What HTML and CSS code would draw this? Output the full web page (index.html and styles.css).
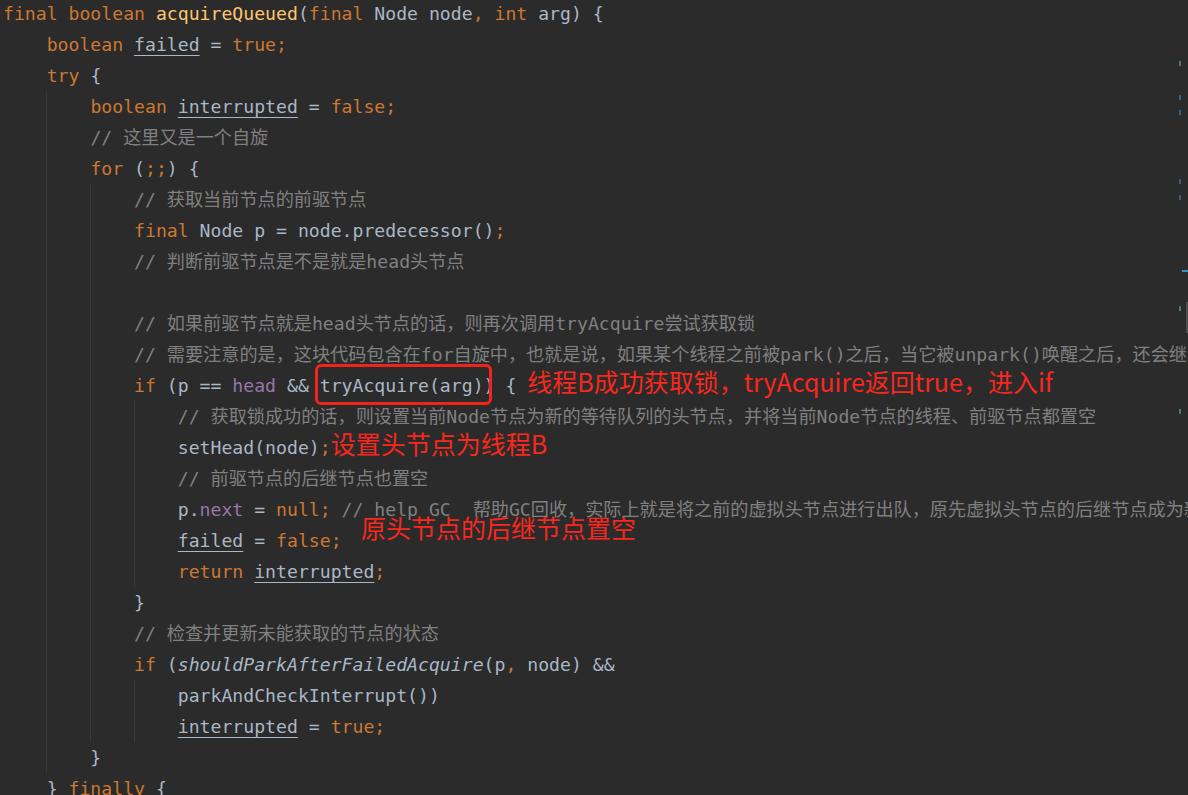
FILE: index.html
```html
<!DOCTYPE html>
<html lang="zh-CN">
  <head>
    <meta charset="UTF-8" />
    <title>acquireQueued</title>
    <link rel="stylesheet" href="styles.css">
  </head>
  <body>
    <div class="editor">
      <div class="code">
        <div class="ln"><span class="kw">final boolean </span><span class="fn">acquireQueued</span>(<span class="kw">final </span>Node node<span class="kw">, int </span>arg) {</div>
        <div class="ln">    <span class="kw">boolean </span><span class="var">failed</span> = <span class="kw">true;</span></div>
        <div class="ln">    <span class="kw">try </span>{</div>
        <div class="ln g1">        <span class="kw">boolean </span><span class="var">interrupted</span> = <span class="kw">false;</span></div>
        <div class="ln g1">        <span class="cm">// 这里又是一个自旋</span></div>
        <div class="ln g1">        <span class="kw">for </span>(<span class="kw">;;</span>) {</div>
        <div class="ln g2">            <span class="cm">// 获取当前节点的前驱节点</span></div>
        <div class="ln g2">            <span class="kw">final </span>Node p = node.predecessor()<span class="kw">;</span></div>
        <div class="ln g2">            <span class="cm">// 判断前驱节点是不是就是head头节点</span></div>
        <div class="ln g2"> </div>
        <div class="ln g2">            <span class="cm">// 如果前驱节点就是head头节点的话，则再次调用tryAcquire尝试获取锁</span></div>
        <div class="ln g2">            <span class="cm">// 需要注意的是，这块代码包含在for自旋中，也就是说，如果某个线程之前被park()之后，当它被unpark()唤醒之后，还会继续执行for循环</span></div>
        <div class="ln g2">            <span class="kw">if </span>(p == <span class="fld">head</span> &amp;&amp; <span class="hl">tryAcquire(arg)</span>) { <span class="note">线程B成功获取锁，tryAcquire返回true，进入if</span></div>
        <div class="ln g3">                <span class="cm">// 获取锁成功的话，则设置当前Node节点为新的等待队列的头节点，并将当前Node节点的线程、前驱节点都置空</span></div>
        <div class="ln g3">                setHead(node)<span class="kw">;</span><span class="note">设置头节点为线程B</span></div>
        <div class="ln g3">                <span class="cm">// 前驱节点的后继节点也置空</span></div>
        <div class="ln g3">                p.<span class="fld">next</span> = <span class="kw">null; </span><span class="cm">// help GC  帮助GC回收，实际上就是将之前的虚拟头节点进行出队，原先虚拟头节点的后继节点成为新的头节点</span></div>
        <div class="ln g3">                <span class="var">failed</span> = <span class="kw">false;</span></div>
        <div class="ln g3">                <span class="kw">return </span><span class="var">interrupted</span><span class="kw">;</span></div>
        <div class="ln g2">            }</div>
        <div class="ln g2">            <span class="cm">// 检查并更新未能获取的节点的状态</span></div>
        <div class="ln g2">            <span class="kw">if </span>(<span class="st">shouldParkAfterFailedAcquire</span>(p<span class="kw">, </span>node) &amp;&amp;</div>
        <div class="ln g3">                parkAndCheckInterrupt())</div>
        <div class="ln g3">                <span class="var">interrupted</span> = <span class="kw">true;</span></div>
        <div class="ln g1">        }</div>
        <div class="ln">    } <span class="kw">finally </span>{</div>
      </div>

      <span class="note note-gc">原头节点的后继节点置空</span>

      <i class="mark green" style="top: 61px"></i>
      <i class="mark blue" style="top: 95px"></i>
      <i class="mark blue" style="top: 110px"></i>
      <i class="mark blue" style="top: 179px"></i>
      <i class="mark blue" style="top: 195px"></i>
      <i class="mark green" style="top: 306px"></i>
      <i class="mark green" style="top: 409px"></i>
      <i class="caret-bar"></i>
      <i class="thumb"></i>
    </div>
  </body>
</html>
```

FILE: styles.css
```css
* {
  margin: 0;
  padding: 0;
  box-sizing: border-box;
}

body {
  background: #2b2b2b;
  overflow: hidden;
}

.editor {
  position: relative;
  width: 1188px;
  height: 795px;
  overflow: hidden;
}

.code {
  margin-top: -2px;
  padding-left: 3px;
  font-family: "DejaVu Sans Mono", "Noto Sans CJK SC", monospace;
  font-size: 18.15px;
  color: #a9b7c6;
}

.ln {
  height: 31px;
  line-height: 31px;
  white-space: pre;
}

/* indent guides */
.ln.g1 {
  background: linear-gradient(#393939, #393939) 43px 0 / 1px 100% no-repeat;
}

.ln.g2 {
  background:
    linear-gradient(#393939, #393939) 43px 0 / 1px 100% no-repeat,
    linear-gradient(#393939, #393939) 87px 0 / 1px 100% no-repeat;
}

.ln.g3 {
  background:
    linear-gradient(#393939, #393939) 43px 0 / 1px 100% no-repeat,
    linear-gradient(#393939, #393939) 87px 0 / 1px 100% no-repeat,
    linear-gradient(#393939, #393939) 131px 0 / 1px 100% no-repeat;
}

.kw {
  color: #cc7832;
}

.fn {
  color: #ffc66d;
}

.fld {
  color: #9876aa;
}

.cm {
  color: #808080;
}

.st {
  font-style: italic;
}

.var {
  text-decoration: underline;
  text-decoration-thickness: 1px;
  text-underline-offset: 4px;
}

.hl {
  position: relative;
}

.hl::after {
  content: "";
  position: absolute;
  left: -5px;
  right: -8px;
  top: -11px;
  bottom: -9px;
  border: 3px solid #f2231b;
  border-radius: 6px;
}

.note {
  font-family: "Noto Sans CJK SC", sans-serif;
  font-size: 25px;
  line-height: 0;
  color: #f8281e;
  white-space: nowrap;
}

.note-gc {
  position: absolute;
  left: 361px;
  top: 527px;
}

/* scrollbar markers */
.mark {
  position: absolute;
  left: 1179px;
  width: 2px;
  height: 5px;
}

.mark.green {
  background: #4f7d57;
}

.mark.blue {
  background: #3e5f80;
}

.caret-bar {
  position: absolute;
  left: 1182px;
  top: 270px;
  width: 6px;
  height: 2px;
  background: #3592c4;
}

.thumb {
  position: absolute;
  left: 1186px;
  top: 302px;
  width: 2px;
  height: 31px;
  background: #4e4e4e;
}
```
